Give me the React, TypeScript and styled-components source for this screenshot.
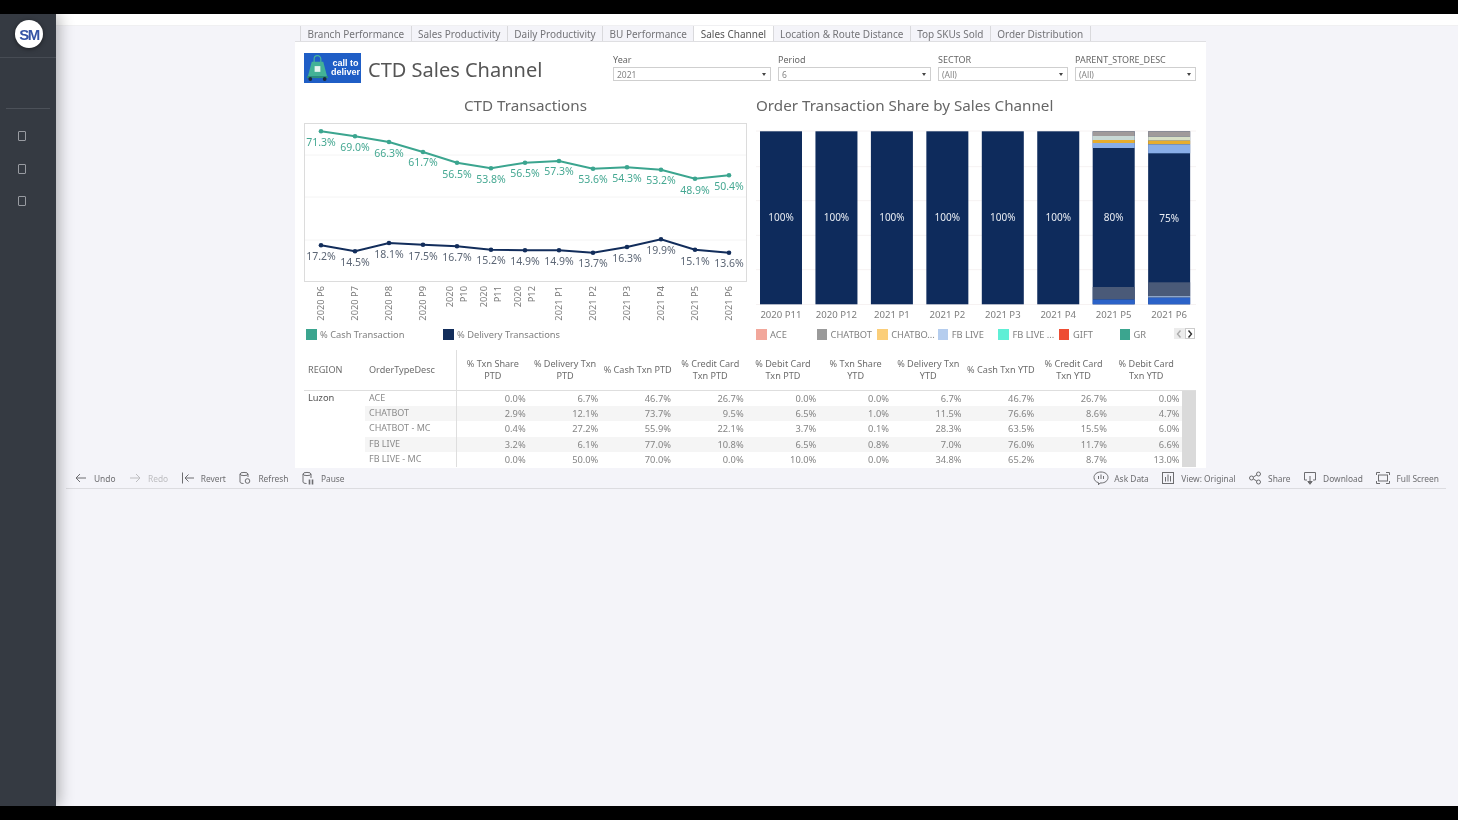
import React from "react";
import styled, { createGlobalStyle } from "styled-components";

const GlobalStyle = createGlobalStyle`
  html, body { margin: 0; padding: 0; background: #000; }
  * { box-sizing: border-box; }
  body { font-family: "Noto Sans", "Open Sans", sans-serif; }
`;

const Frame = styled.div`
  width: 1458px;
  height: 820px;
  overflow: hidden;
  display: flex;
  flex-direction: column;
  background: #000;
  filter: blur(0.35px);
`;

const BlackBar = styled.div`
  height: 14px;
  flex: none;
  background: #000;
`;

const Body = styled.div`
  flex: 1;
  display: flex;
  min-height: 0;
`;

const Sidebar = styled.aside`
  width: 56px;
  flex: none;
  background: #353a42;
  box-shadow: 3px 0 14px rgba(0, 0, 0, 0.3);
  z-index: 1;
`;

const LogoArea = styled.div`
  height: 44px;
  border-bottom: 1px solid #474c54;
  padding: 6px 0 0 15px;
`;

const LogoBadge = styled.div`
  width: 28px;
  height: 28px;
  border-radius: 50%;
  background: #fff;
  color: #3553a5;
  font-family: "Liberation Sans", sans-serif;
  font-size: 15px;
  font-weight: 700;
  letter-spacing: -1.5px;
  display: flex;
  align-items: center;
  justify-content: center;
  box-shadow: 0 1px 4px rgba(0, 0, 0, 0.5);
`;

const SideRule = styled.div`
  height: 1px;
  margin: 50px 6px 0;
  background: #4c5159;
`;

const SideIcons = styled.div`
  display: flex;
  flex-direction: column;
  gap: 22.5px;
  padding: 22px 0 0 18px;
`;

const SideIcon = styled.span`
  display: block;
  width: 8px;
  height: 10px;
  border: 1px solid #989ba1;
  border-radius: 1px;
`;

const Main = styled.main`
  flex: 1;
  min-width: 0;
  background: #f4f4f9;
  display: flex;
  flex-direction: column;
`;

const TopStrip = styled.div`
  height: 12px;
  flex: none;
  background: #fff;
  border-bottom: 1px solid #f0f0f2;
`;

const TabBar = styled.nav`
  width: 911px;
  height: 16px;
  margin-left: 239px;
  padding-left: 5px;
  display: flex;
  border-bottom: 1px solid #dfdfe2;
  flex: none;
`;

const Tab = styled.div<{ $active?: boolean }>`
  height: 15px;
  padding: 0 6.4px;
  font-size: 10px;
  line-height: 16px;
  white-space: nowrap;
  color: ${(p) => (p.$active ? "#555" : "#747478")};
  background: ${(p) => (p.$active ? "#fff" : "transparent")};
  border-right: 1px solid #d9d9dc;
  &:first-child {
    border-left: 1px solid #d9d9dc;
  }
`;

const Dashboard = styled.section`
  width: 911px;
  height: 426px;
  margin-left: 239px;
  flex: none;
  background: #fff;
  padding-left: 9px;
`;

const Header = styled.header`
  height: 48px;
  padding: 11px 10px 0 0;
  display: flex;
  align-items: flex-start;
`;

const CallLogo = styled.div`
  width: 57px;
  height: 30px;
  flex: none;
  background: #1f5ec6;
  display: flex;
  align-items: center;
  gap: 2px;
  padding: 0 1px 0 2px;
`;

const CallText = styled.div`
  font-family: "Liberation Sans", sans-serif;
  font-size: 9px;
  line-height: 9px;
  font-weight: 700;
  text-align: center;
  color: #fff;
`;

const Title = styled.h1`
  margin: 0 0 0 7px;
  font-size: 20px;
  line-height: 34px;
  font-weight: 400;
  color: #555;
  white-space: nowrap;
`;

const Filters = styled.div`
  margin-left: auto;
  display: flex;
  gap: 7px;
`;

const Filter = styled.div<{ $w: number }>`
  width: ${(p) => p.$w}px;
  margin-top: 1px;
`;

const FilterLabel = styled.div`
  height: 13px;
  font-size: 9px;
  line-height: 11px;
  color: #666;
  white-space: nowrap;
`;

const Select = styled.div`
  height: 14px;
  padding: 0 3px;
  border: 1px solid #cfcfcf;
  display: flex;
  align-items: center;
  justify-content: space-between;
  font-size: 8.5px;
  color: #858585;
  &::after {
    content: "";
    margin-right: 1px;
    border-left: 2.5px solid transparent;
    border-right: 2.5px solid transparent;
    border-top: 3px solid #444;
  }
`;

const Charts = styled.div`
  display: grid;
  grid-template-columns: 443px 440px;
  column-gap: 9px;
`;

const ChartPanel = styled.div`
  display: flex;
  flex-direction: column;
`;

const ChartTitle = styled.h2<{ $center?: boolean }>`
  margin: 6px 0 9px;
  height: 18px;
  font-size: 15.2px;
  line-height: 18px;
  font-weight: 400;
  color: #666;
  white-space: nowrap;
  text-align: ${(p) => (p.$center ? "center" : "left")};
`;

const ChartSvg = styled.svg`
  display: block;
  width: 100%;
  height: 199px;
  font-family: "Noto Sans", sans-serif;
`;

const Legend = styled.div`
  height: 11px;
  margin-top: 7px;
  display: flex;
  position: relative;
`;

const LegendItem = styled.div<{ $w: number; $pad?: number }>`
  width: ${(p) => p.$w}px;
  padding-left: ${(p) => p.$pad ?? 0}px;
  display: flex;
  align-items: center;
  gap: 3.5px;
  font-size: 9.3px;
  color: #808080;
  white-space: nowrap;
`;

const Swatch = styled.span<{ $color: string }>`
  width: 10.5px;
  height: 11px;
  flex: none;
  background: ${(p) => p.$color};
`;

const LegendNav = styled.div`
  position: absolute;
  right: 1px;
  top: -1px;
  display: flex;
`;

const NavButton = styled.span<{ $on?: boolean }>`
  width: 10.5px;
  height: 11px;
  display: flex;
  align-items: center;
  justify-content: center;
  color: ${(p) => (p.$on ? "#333" : "#aaa")};
  background: ${(p) => (p.$on ? "#fff" : "#ececec")};
  border: 1px solid ${(p) => (p.$on ? "#ccc" : "#ececec")};
`;

const TableWrap = styled.div`
  margin-top: 10px;
  width: 892px;
  position: relative;
`;

const HeadRow = styled.div`
  display: grid;
  grid-template-columns: 61px 91px repeat(10, 72.67px);
  height: 41px;
  border-bottom: 1px solid #dedede;
`;

const HeadCell = styled.div<{ $left?: boolean }>`
  display: flex;
  align-items: center;
  justify-content: ${(p) => (p.$left ? "flex-start" : "center")};
  padding: ${(p) => (p.$left ? "0 0 0 4px" : "0")};
  text-align: center;
  font-size: 9.1px;
  line-height: 12.5px;
  white-space: pre-line;
  color: #6c6c6c;
  &:nth-child(3) {
    border-left: 1px solid #dedede;
  }
`;

const DataRow = styled.div`
  display: grid;
  grid-template-columns: 61px 1fr;
  height: 15.2px;
`;

const RegionCell = styled.div`
  padding-left: 4px;
  font-size: 9.3px;
  line-height: 14px;
  color: #555;
`;

const RowBody = styled.div<{ $alt: boolean }>`
  display: grid;
  grid-template-columns: 91px repeat(10, 72.67px);
  background: ${(p) => (p.$alt ? "#f5f5f5" : "#fff")};
`;

const TypeCell = styled.div`
  padding-left: 4px;
  font-size: 9px;
  line-height: 14px;
  color: #8b8b8b;
  white-space: nowrap;
`;

const ValueCell = styled.div`
  padding-right: 3px;
  text-align: right;
  font-size: 9.3px;
  line-height: 15px;
  color: #858585;
  &:nth-child(2) {
    border-left: 1px solid #dedede;
  }
`;

const ScrollTrack = styled.div`
  position: absolute;
  right: 0;
  top: 41px;
  bottom: 0;
  width: 14px;
  background: #dadada;
`;

const Toolbar = styled.div`
  width: 1380px;
  height: 21px;
  margin-left: 10px;
  flex: none;
  padding: 0 7px 0 9px;
  display: flex;
  align-items: center;
  border-bottom: 1px solid #dcdce0;
`;

const ToolGroup = styled.div`
  display: flex;
  align-items: center;
  gap: 13.5px;
`;

const RightTools = styled(ToolGroup)`
  margin-left: auto;
`;

const ToolItem = styled.div<{ $off?: boolean; $gap?: number }>`
  display: flex;
  align-items: center;
  gap: ${(p) => p.$gap ?? 7}px;
  font-size: 8.4px;
  white-space: nowrap;
  color: ${(p) => (p.$off ? "#bdbdc0" : "#6d6d70")};
  svg {
    display: block;
    flex: none;
  }
`;

const periods = ["2020 P6", "2020 P7", "2020 P8", "2020 P9", ["2020", "P10"], ["2020", "P11"], ["2020", "P12"], "2021 P1", "2021 P2", "2021 P3", "2021 P4", "2021 P5", "2021 P6"];
const xs = periods.map((_, i) => 321 + i * 34);

const cash = [
  [131.3, 141.7, "71.3%"], [136.3, 146.7, "69.0%"], [142, 152.3, "66.3%"], [152, 162, "61.7%"], [162.7, 173.3, "56.5%"],
  [168.3, 178.7, "53.8%"], [162.7, 172.7, "56.5%"], [161, 171, "57.3%"], [168.7, 178.7, "53.6%"], [167.3, 177.3, "54.3%"],
  [169.7, 180, "53.2%"], [178.7, 189.3, "48.9%"], [175.3, 185.7, "50.4%"],
] as const;

const delivery = [
  [245.3, 255.3, "17.2%"], [251.3, 261.3, "14.5%"], [243, 254, "18.1%"], [244.7, 255.3, "17.5%"], [246.3, 256.7, "16.7%"],
  [249.7, 260, "15.2%"], [250.3, 260.7, "14.9%"], [250.3, 260.7, "14.9%"], [252.7, 263, "13.7%"], [247, 257.3, "16.3%"],
  [239.3, 250, "19.9%"], [249.7, 260.3, "15.1%"], [252.7, 263, "13.6%"],
] as const;

const LineSeries = ({ data, color, text }: { data: typeof cash | typeof delivery; color: string; text: string }) => (
  <g>
    <polyline points={data.map((d, i) => `${xs[i]},${d[0]}`).join(" ")} fill="none" stroke={color} strokeWidth="2" />
    {data.map((d, i) => (
      <circle key={i} cx={xs[i]} cy={d[0]} r="2.3" fill={color} />
    ))}
    {data.map((d, i) => (
      <text key={i} x={xs[i]} y={d[1] + 4.2} textAnchor="middle" fontSize="10.5" fill={text}>
        {d[2]}
      </text>
    ))}
  </g>
);

const LineChart = () => (
  <ChartSvg viewBox="304 123 443 199">
    <rect x="304.5" y="123.5" width="442" height="158" fill="#fff" stroke="#dcdcdc" />
    {[155, 197, 240].map((y) => (
      <line key={y} x1="305" x2="746" y1={y} y2={y} stroke="#f4f4f4" />
    ))}
    <LineSeries data={cash} color="#3ba58f" text="#45a892" />
    <LineSeries data={delivery} color="#122d5b" text="#5c6675" />
    {periods.map((p, i) =>
      Array.isArray(p) ? (
        <g key={i} fontSize="9.3" fill="#7a7a7a" textAnchor="end">
          <text transform={`translate(${xs[i] - 4},286) rotate(-90)`}>{p[0]}</text>
          <text transform={`translate(${xs[i] + 10},286) rotate(-90)`}>{p[1]}</text>
        </g>
      ) : (
        <text key={i} transform={`translate(${xs[i] + 3},286) rotate(-90)`} fontSize="9.3" fill="#7a7a7a" textAnchor="end">
          {p}
        </text>
      ),
    )}
  </ChartSvg>
);

type Seg = [number, number, string];
const bars: { label: string; value: string; vy: number; segs: Seg[] }[] = [
  { label: "2020 P11", value: "100%", vy: 217, segs: [] },
  { label: "2020 P12", value: "100%", vy: 217, segs: [] },
  { label: "2021 P1", value: "100%", vy: 217, segs: [] },
  { label: "2021 P2", value: "100%", vy: 217, segs: [] },
  { label: "2021 P3", value: "100%", vy: 217, segs: [] },
  { label: "2021 P4", value: "100%", vy: 217.5, segs: [] },
  {
    label: "2021 P5",
    value: "80%",
    vy: 217.5,
    segs: [[131.3, 136, "#a09a9a"], [136, 140, "#c8d8d5"], [140, 143, "#e6ad2e"], [143, 148, "#88aee8"], [287, 299.5, "#4a5a78"], [299.5, 304.3, "#2b62c8"]],
  },
  {
    label: "2021 P6",
    value: "75%",
    vy: 218,
    segs: [[131.3, 136.7, "#a09a9a"], [136.7, 140.7, "#d7dfc5"], [140.7, 144.3, "#e6ad2e"], [144.3, 153.3, "#88aee8"], [282.3, 296, "#4a5a78"], [296, 297.7, "#8fa6c8"], [297.7, 304.3, "#2b62c8"]],
  },
];

const BarChart = () => (
  <ChartSvg viewBox="756 123 440 199">
    {[131, 166.7, 200.7, 235.3, 269.7, 304.5].map((y) => (
      <line key={y} x1="756" x2="1196" y1={y} y2={y} stroke="#f6f2f2" />
    ))}
    {bars.map((b, i) => {
      const x = 760 + i * 55.45;
      return (
        <g key={b.label}>
          <rect x={x} y="131.3" width="42" height="173" fill="#0e2b5c" />
          {b.segs.map((s) => (
            <rect key={s[0]} x={x} y={s[0]} width="42" height={s[1] - s[0]} fill={s[2]} />
          ))}
          <text x={x + 21} y={b.vy + 3.6} textAnchor="middle" fontSize="10" fill="#e9edf3">
            {b.value}
          </text>
          <text x={x + 21} y="317.5" textAnchor="middle" fontSize="9.6" fill="#7d7d7d">
            {b.label}
          </text>
        </g>
      );
    })}
  </ChartSvg>
);

const channelLegend = [
  ["ACE", "#f2a79b"],
  ["CHATBOT", "#9a9a9a"],
  ["CHATBO...", "#fbce79"],
  ["FB LIVE", "#b5cdee"],
  ["FB LIVE ...", "#5fefd6"],
  ["GIFT", "#ee4d33"],
  ["GR", "#3ba58f"],
];

const tableHead = [
  "% Txn Share\nPTD", "% Delivery Txn\nPTD", "% Cash Txn PTD", "% Credit Card\nTxn PTD", "% Debit Card\nTxn PTD",
  "% Txn Share\nYTD", "% Delivery Txn\nYTD", "% Cash Txn YTD", "% Credit Card\nTxn YTD", "% Debit Card\nTxn YTD",
];

const tableRows = [
  ["ACE", "0.0%", "6.7%", "46.7%", "26.7%", "0.0%", "0.0%", "6.7%", "46.7%", "26.7%", "0.0%"],
  ["CHATBOT", "2.9%", "12.1%", "73.7%", "9.5%", "6.5%", "1.0%", "11.5%", "76.6%", "8.6%", "4.7%"],
  ["CHATBOT - MC", "0.4%", "27.2%", "55.9%", "22.1%", "3.7%", "0.1%", "28.3%", "63.5%", "15.5%", "6.0%"],
  ["FB LIVE", "3.2%", "6.1%", "77.0%", "10.8%", "6.5%", "0.8%", "7.0%", "76.0%", "11.7%", "6.6%"],
  ["FB LIVE - MC", "0.0%", "50.0%", "70.0%", "0.0%", "10.0%", "0.0%", "34.8%", "65.2%", "8.7%", "13.0%"],
];

const Icon = ({ w = 12, children }: { w?: number; children: React.ReactNode }) => (
  <svg width={w} height="14" viewBox={`0 0 ${w} 14`} fill="none" stroke="currentColor" strokeWidth="1">
    {children}
  </svg>
);

const tools = [
  { label: "Undo", icon: <path d="M11 7H1M5 3L1 7l4 4" /> },
  { label: "Redo", off: true, icon: <path d="M1 7h10M7 3l4 4-4 4" /> },
  { label: "Revert", icon: <path d="M.5 1.5v11M12 7H3M6.5 3.5L3 7l3.5 3.5" /> },
  {
    label: "Refresh",
    icon: (
      <>
        <ellipse cx="5" cy="3" rx="4" ry="1.6" />
        <path d="M1 3v8c0 .8 1.5 1.5 3.5 1.5M9 3v3" />
        <circle cx="8.5" cy="10" r="2.3" />
      </>
    ),
  },
  {
    label: "Pause",
    icon: (
      <>
        <ellipse cx="5" cy="3" rx="4" ry="1.6" />
        <path d="M1 3v8c0 .8 1.5 1.5 3.5 1.5M9 3v4" />
        <path d="M7.5 8.5v5M10.5 8.5v5" strokeWidth="1.6" />
      </>
    ),
  },
];

const AskDataIcon = () => (
  <Icon w={16}>
    <path d="M8 1c4 0 7 2.300 7 5.500S12 12 8 12H7l-1.500 1.800V11.700C2.800 11 1 9 1 6.500 1 3.300 4 1 8 1z" />
    <path d="M5.500 5v3M8 3.500V8M10.500 5v3" />
  </Icon>
);

const ViewIcon = () => (
  <Icon>
    <rect x=".5" y="1.500" width="11" height="11" />
    <path d="M3.500 6v4.500M6 3.500v7M8.500 5v5.500" />
  </Icon>
);

const ShareIcon = () => (
  <Icon>
    <circle cx="2.500" cy="7" r="2" />
    <circle cx="9.500" cy="3" r="2" />
    <circle cx="9.500" cy="11" r="2" />
    <path d="M4.300 6l3.500-2M4.300 8l3.500 2" />
  </Icon>
);

const DownloadIcon = () => (
  <Icon>
    <path d="M3 9H.5V1.500h11V9H9" />
    <path d="M6 5v8" />
    <path d="M3.800 10.500L6 13.300l2.200-2.800z" fill="currentColor" />
  </Icon>
);

const FullScreenIcon = () => (
  <Icon w={14}>
    <rect x="2.500" y="4" width="9" height="6" />
    <path d="M.5 4V1.500H4M10 1.500h3.500V4M.5 10v2.500H4M10 12.500h3.500V10" />
  </Icon>
);

const Chevron = ({ d }: { d: string }) => (
  <svg width="6" height="8" viewBox="0 0 6 8" fill="none" stroke="currentColor" strokeWidth="1.4">
    <path d={d} />
  </svg>
);

const BagIcon = () => (
  <svg width="24" height="27" viewBox="0 0 24 27">
    <path d="M8.500 7V3.500a3.500 3.500 0 0 1 7 0V7" fill="none" stroke="#49b59a" strokeWidth="1.200" />
    <path d="M6 6.500h12l4 15H2z" fill="#43b296" />
    <rect x="9" y="11" width="6" height="6" fill="#e4f4ef" />
    <rect x="1" y="21.500" width="22" height="2" fill="#2b8f78" />
    <circle cx="4.500" cy="24.500" r="2" fill="#1c2a3a" />
    <circle cx="19.500" cy="24.500" r="2" fill="#1c2a3a" />
  </svg>
);

const filters = [
  { label: "Year", value: "2021", w: 158 },
  { label: "Period", value: "6", w: 153 },
  { label: "SECTOR", value: "(All)", w: 130 },
  { label: "PARENT_STORE_DESC", value: "(All)", w: 121 },
];

const tabs = ["Branch Performance", "Sales Productivity", "Daily Productivity", "BU Performance", "Sales Channel", "Location & Route Distance", "Top SKUs Sold", "Order Distribution"];

export default function App() {
  return (
    <Frame>
      <GlobalStyle />
      <BlackBar />
      <Body>
        <Sidebar>
          <LogoArea>
            <LogoBadge>SM</LogoBadge>
          </LogoArea>
          <SideRule />
          <SideIcons>
            <SideIcon />
            <SideIcon />
            <SideIcon />
          </SideIcons>
        </Sidebar>
        <Main>
          <TopStrip />
          <TabBar>
            {tabs.map((t) => (
              <Tab key={t} $active={t === "Sales Channel"}>
                {t}
              </Tab>
            ))}
          </TabBar>
          <Dashboard>
            <Header>
              <CallLogo>
                <BagIcon />
                <CallText>
                  call to
                  <br />
                  deliver
                </CallText>
              </CallLogo>
              <Title>CTD Sales Channel</Title>
              <Filters>
                {filters.map((f) => (
                  <Filter key={f.label} $w={f.w}>
                    <FilterLabel>{f.label}</FilterLabel>
                    <Select>{f.value}</Select>
                  </Filter>
                ))}
              </Filters>
            </Header>
            <Charts>
              <ChartPanel>
                <ChartTitle $center>CTD Transactions</ChartTitle>
                <LineChart />
                <Legend>
                  <LegendItem $w={137} $pad={2}>
                    <Swatch $color="#3ba58f" />% Cash Transaction
                  </LegendItem>
                  <LegendItem $w={200} $pad={2}>
                    <Swatch $color="#122d5b" />% Delivery Transactions
                  </LegendItem>
                </Legend>
              </ChartPanel>
              <ChartPanel>
                <ChartTitle>Order Transaction Share by Sales Channel</ChartTitle>
                <BarChart />
                <Legend>
                  {channelLegend.map(([name, color]) => (
                    <LegendItem key={name} $w={60.6}>
                      <Swatch $color={color} />
                      {name}
                    </LegendItem>
                  ))}
                  <LegendNav>
                    <NavButton>
                      <Chevron d="M4.500 .5L1.500 4l3 3.500" />
                    </NavButton>
                    <NavButton $on>
                      <Chevron d="M1.500 .5l3 3.500-3 3.500" />
                    </NavButton>
                  </LegendNav>
                </Legend>
              </ChartPanel>
            </Charts>
            <TableWrap>
              <HeadRow>
                <HeadCell $left>REGION</HeadCell>
                <HeadCell $left>OrderTypeDesc</HeadCell>
                {tableHead.map((h) => (
                  <HeadCell key={h}>{h}</HeadCell>
                ))}
              </HeadRow>
              {tableRows.map((row, i) => (
                <DataRow key={row[0]}>
                  <RegionCell>{i === 0 ? "Luzon" : ""}</RegionCell>
                  <RowBody $alt={i % 2 === 1}>
                    <TypeCell>{row[0]}</TypeCell>
                    {row.slice(1).map((v, j) => (
                      <ValueCell key={j}>{v}</ValueCell>
                    ))}
                  </RowBody>
                </DataRow>
              ))}
              <ScrollTrack />
            </TableWrap>
          </Dashboard>
          <Toolbar>
            <ToolGroup>
              {tools.map((t) => (
                <ToolItem key={t.label} $off={t.off}>
                  <Icon>{t.icon}</Icon>
                  {t.label}
                </ToolItem>
              ))}
            </ToolGroup>
            <RightTools>
              <ToolItem $gap={5}>
                <AskDataIcon />
                Ask Data
              </ToolItem>
              <ToolItem>
                <ViewIcon />
                View: Original
              </ToolItem>
              <ToolItem>
                <ShareIcon />
                Share
              </ToolItem>
              <ToolItem>
                <DownloadIcon />
                Download
              </ToolItem>
              <ToolItem $gap={6}>
                <FullScreenIcon />
                Full Screen
              </ToolItem>
            </RightTools>
          </Toolbar>
        </Main>
      </Body>
      <BlackBar />
    </Frame>
  );
}
